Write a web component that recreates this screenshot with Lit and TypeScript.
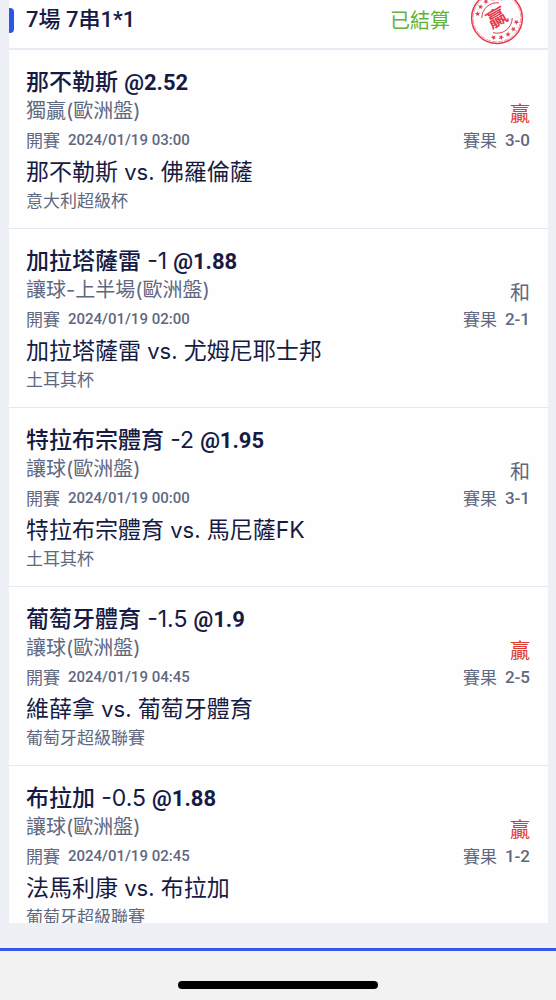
import { LitElement, html, css, svg, nothing } from "lit";
import { customElement, property } from "lit/decorators.js";

interface Leg {
  pick: string;
  handicap?: string;
  odds: string;
  market: string;
  kickoff: string;
  home: string;
  away: string;
  league: string;
  outcome: string;
  score: string;
}

const LEGS: Leg[] = [
  { pick: "那不勒斯", odds: "2.52", market: "獨贏(歐洲盤)", kickoff: "2024/01/19 03:00", home: "那不勒斯", away: "佛羅倫薩", league: "意大利超級杯", outcome: "贏", score: "3-0" },
  { pick: "加拉塔薩雷", handicap: "-1", odds: "1.88", market: "讓球-上半場(歐洲盤)", kickoff: "2024/01/19 02:00", home: "加拉塔薩雷", away: "尤姆尼耶士邦", league: "土耳其杯", outcome: "和", score: "2-1" },
  { pick: "特拉布宗體育", handicap: "-2", odds: "1.95", market: "讓球(歐洲盤)", kickoff: "2024/01/19 00:00", home: "特拉布宗體育", away: "馬尼薩FK", league: "土耳其杯", outcome: "和", score: "3-1" },
  { pick: "葡萄牙體育", handicap: "-1.5", odds: "1.9", market: "讓球(歐洲盤)", kickoff: "2024/01/19 04:45", home: "維薛拿", away: "葡萄牙體育", league: "葡萄牙超級聯賽", outcome: "贏", score: "2-5" },
  { pick: "布拉加", handicap: "-0.5", odds: "1.88", market: "讓球(歐洲盤)", kickoff: "2024/01/19 02:45", home: "法馬利康", away: "布拉加", league: "葡萄牙超級聯賽", outcome: "贏", score: "1-2" },
];

@customElement("win-stamp")
export class WinStamp extends LitElement {
  static styles = css`
    :host { display: block; }
    svg { display: block; width: 54px; height: 54px; }
    .glyph { font: 700 20px "Noto Sans CJK TC", sans-serif; fill: #e5384c; }
  `;

  render() {
    const angles = [12, 34, 56, 78, 100, 192, 214, 236, 258, 280];
    return html`
      <svg viewBox="-27 -27 54 54" role="img" aria-label="贏">
        <g fill="none" stroke="#e5384c">
          <circle r="25.4" stroke-width="1.5" />
          <circle r="23.8" stroke-width="0.7" stroke-dasharray="5 1.2" opacity="0.7" />
          <path d="M-15.2 0A15.2 15.2 0 0 1 2 -15.1" stroke-width="1" />
          <path d="M15.2 0A15.2 15.2 0 0 1 -4 14.7" stroke-width="1" />
        </g>
        ${angles.map(
          (a) => svg`<path fill="#e5384c" transform="rotate(${a}) translate(19.8 0) rotate(90)"
            d="M0-2.8L.7-.9 2.7-.8 1.1 .4 1.7 2.3 0 1.2-1.7 2.3-1.1 .4-2.7-.8-.7-.9Z" />`
        )}
        <text class="glyph" text-anchor="middle" y="7" transform="rotate(-30)">贏</text>
      </svg>
    `;
  }
}

@customElement("bet-leg")
export class BetLeg extends LitElement {
  @property({ attribute: false }) leg!: Leg;

  static styles = css`
    :host { display: block; border-bottom: 1px solid #e3e8f2; }
    .leg {
      display: grid;
      grid-template-columns: 1fr auto;
      grid-template-rows: 30px 28px 30px 34px 22px;
      padding: 17px 18px 17px 17px;
      color: #5f6880;
      white-space: nowrap;
    }
    h2, p { margin: 0; }
    .pick { grid-column: 1 / -1; font-family: Inter, "Noto Sans CJK TC", sans-serif; font-size: 23px; line-height: 30px; font-weight: 500; color: #161b44; }
    .handicap { font-weight: 400; }
    .odds { font-family: Roboto, sans-serif; font-size: 22px; font-weight: 700; }
    .market { font-family: Inter, "Noto Sans CJK TC", sans-serif; font-size: 20px; line-height: 28px; }
    .outcome { align-self: end; font-size: 20px; line-height: 24px; text-align: right; }
    .win { color: #dd3a32; }
    .kickoff, .score { display: flex; gap: 8px; font-size: 17px; line-height: 30px; }
    .score { justify-content: flex-end; }
    .digits { font-family: Roboto, sans-serif; font-size: 15px; font-weight: 500; }
    .score .digits { font-size: 17px; }
    .match { grid-column: 1 / -1; font-family: Inter, "Noto Sans CJK TC", sans-serif; font-size: 23px; line-height: 34px; color: #161b44; }
    .versus { font-size: 22px; white-space: pre; }
    .league { grid-column: 1 / -1; font-size: 17px; line-height: 22px; }
  `;

  render() {
    const l = this.leg;
    return html`
      <article class="leg">
        <h2 class="pick">${l.pick}
          ${l.handicap ? html`<span class="handicap">${l.handicap}</span>` : nothing}
          <span class="odds">@${l.odds}</span></h2>
        <p class="market">${l.market}</p>
        <p class="outcome ${l.outcome === "贏" ? "win" : ""}">${l.outcome}</p>
        <p class="kickoff"><span>開賽</span><time class="digits">${l.kickoff}</time></p>
        <p class="score"><span>賽果</span><span class="digits">${l.score}</span></p>
        <p class="match">${l.home}<span class="versus"> vs. </span>${l.away}</p>
        <p class="league">${l.league}</p>
      </article>
    `;
  }
}

@customElement("app-root")
export class AppRoot extends LitElement {
  static styles = css`
    :host {
      display: flex;
      flex-direction: column;
      height: 100vh;
      background: #edf1f5;
      font-family: "Noto Sans CJK TC", sans-serif;
    }
    .page { flex: 1; min-height: 0; display: flex; padding: 0 8px 25px 9px; }
    .slip { flex: 1; min-width: 0; overflow: hidden; background: #fefefe; }
    .head {
      display: flex;
      align-items: center;
      padding: 0 24px 8px 0;
      border-bottom: 2px solid #e8ecf4;
      color: #161b44;
    }
    .mark { width: 5px; height: 25px; border-radius: 0 4px 4px 0; background: #2f54eb; }
    h1 { flex: 1; margin: 0 0 0 12px; font: 500 22px/40px Roboto, "Noto Sans CJK TC", sans-serif; }
    .status { margin-right: 20px; font-size: 20px; line-height: 40px; color: #5fb336; }
    .stamp { margin: -9px 0 -5px; }
    .bar {
      display: flex;
      justify-content: center;
      padding: 30px 0 11px;
      border-top: 3px solid #3556e8;
      background: #f2f2f2;
    }
    .home { width: 36%; height: 8px; border-radius: 4px; background: #000; }
  `;

  render() {
    return html`
      <main class="page">
        <section class="slip">
          <header class="head">
            <span class="mark"></span>
            <h1>7場 7串1*1</h1>
            <span class="status">已結算</span>
            <win-stamp class="stamp"></win-stamp>
          </header>
          ${LEGS.map((leg) => html`<bet-leg .leg=${leg}></bet-leg>`)}
        </section>
      </main>
      <footer class="bar"><span class="home"></span></footer>
    `;
  }
}
